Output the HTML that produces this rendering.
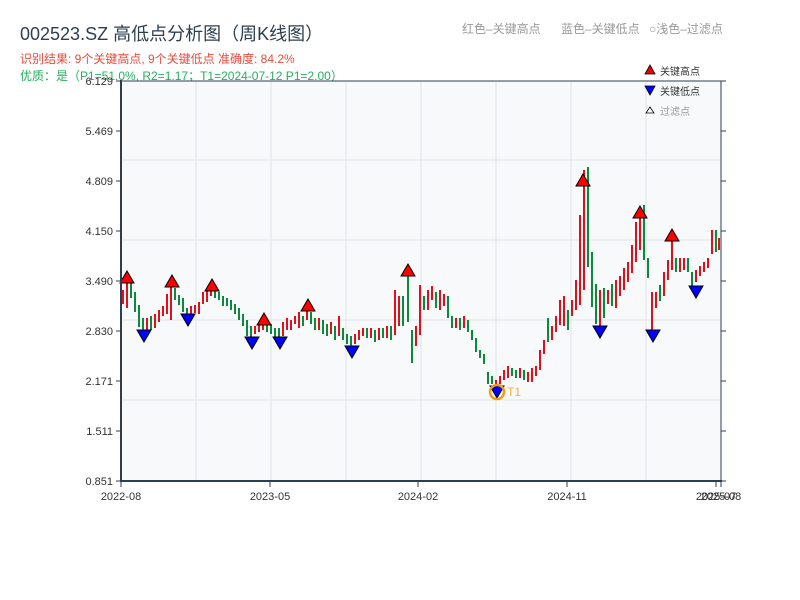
<!DOCTYPE html>
<html><head><meta charset="utf-8"><style>
body{margin:0;background:#fff;width:800px;height:600px;overflow:hidden;font-family:"Liberation Sans","Noto Sans CJK SC",sans-serif}
</style></head><body>
<svg width="800" height="600" xmlns="http://www.w3.org/2000/svg" style="position:absolute;left:0;top:0;font-family:'Liberation Sans','Noto Sans CJK SC',sans-serif">
<text x="20" y="40" font-size="18" fill="#2c3e50">002523.SZ 高低点分析图（周K线图）</text>
<text x="20" y="63" font-size="12" fill="#e74c3c">识别结果: 9个关键高点, 9个关键低点  准确度: 84.2%</text>
<text x="20" y="80" font-size="12" fill="#27ae60">优质：是（P1=51.0%, R2=1.17；T1=2024-07-12 P1=2.00）</text>
<text x="462" y="33" font-size="12" fill="#999">红色–关键高点</text>
<text x="561" y="33" font-size="12" fill="#999">蓝色–关键低点</text>
<text x="649" y="33" font-size="12" fill="#999">○浅色–过滤点</text>
<rect x="121" y="81" width="600" height="400" fill="#f7f9fb"/>
<g stroke="#e1e5ea" stroke-width="1">
<line x1="196" y1="81" x2="196" y2="481"/><line x1="271" y1="81" x2="271" y2="481"/><line x1="346" y1="81" x2="346" y2="481"/><line x1="421" y1="81" x2="421" y2="481"/><line x1="496" y1="81" x2="496" y2="481"/><line x1="571" y1="81" x2="571" y2="481"/><line x1="646" y1="81" x2="646" y2="481"/>
<line x1="121" y1="160" x2="721" y2="160"/><line x1="121" y1="240" x2="721" y2="240"/><line x1="121" y1="320" x2="721" y2="320"/><line x1="121" y1="400" x2="721" y2="400"/>
</g>
<path stroke="#e0101a" stroke-width="2" fill="none" d="M123 290v14M127 278v30M147 318v12M155 314v14M159 310v12M163 306v10M167 294v20M171 285v35M191 306v10M195 305v8M199 302v12M203 292v12M207 290v12M211 282v14M255 326v8M259 322v10M263 316v14M283 322v14M287 318v12M291 320v10M295 316v8M299 312v16M307 308v12M319 318v12M331 322v12M339 316v20M355 334v10M359 330v10M363 328v8M371 328v10M379 328v12M387 326v12M395 290v45M399 296v30M416 326v20M420 285v50M428 290v20M432 286v14M440 290v20M444 294v12M456 318v10M464 316v12M496 380v6M500 376v8M504 370v10M508 366v12M520 368v10M528 372v10M532 368v14M536 366v10M540 350v20M544 340v14M552 326v14M556 316v16M560 300v25M564 296v30M572 300v16M576 280v30M580 215v90M584 170v120M600 290v40M608 290v14M616 280v28M620 276v20M624 268v22M628 262v20M632 245v28M636 222v40M640 210v40M652 292v48M656 292v16M664 272v24M668 260v20M672 240v30M680 258v14M684 258v12M696 270v12M700 266v10M704 262v10M708 258v10M712 230v24M719 238v12"/>
<path stroke="#0a8a3a" stroke-width="2" fill="none" d="M131 280v18M135 292v20M139 305v22M143 318v14M151 316v14M175 288v12M179 295v10M183 298v14M187 308v12M215 288v10M219 292v8M223 296v10M227 298v8M231 300v10M235 304v10M239 308v12M243 314v12M247 320v16M251 326v12M267 322v10M271 324v10M275 328v10M279 328v12M303 316v10M311 312v12M315 318v12M323 320v14M327 324v12M335 326v14M343 328v12M347 334v10M351 336v10M367 328v10M375 330v12M383 328v10M391 326v14M403 296v30M408 276v46M412 330v33M424 296v14M436 292v16M448 296v22M452 316v12M460 318v12M468 320v12M472 330v10M476 338v14M480 350v8M484 354v10M488 372v12M492 376v8M512 368v8M516 370v8M524 370v10M548 318v24M568 310v20M588 167v100M592 252v55M596 284v40M604 288v30M612 284v22M644 205v55M648 258v20M660 285v16M676 258v14M688 258v14M692 272v14M716 230v22"/>
<g stroke="#000" stroke-width="1" fill="#f00">
<polygon points="127,271 134,283 120,283"/><polygon points="172,275 179,287 165,287"/><polygon points="212,279 219,291 205,291"/><polygon points="264,313 271,325 257,325"/><polygon points="308,299 315,311 301,311"/><polygon points="408,264 415,276 401,276"/><polygon points="583,174 590,186 576,186"/><polygon points="640,206 647,218 633,218"/><polygon points="672,229 679,241 665,241"/>
</g>
<g stroke="#000" stroke-width="1" fill="#00f">
<polygon points="144,342 151,330 137,330"/><polygon points="188,326 195,314 181,314"/><polygon points="252,349 259,337 245,337"/><polygon points="280,349 287,337 273,337"/><polygon points="352,358 359,346 345,346"/><polygon points="497,398 504,386 490,386"/><polygon points="600,338 607,326 593,326"/><polygon points="653,342 660,330 646,330"/><polygon points="696,298 703,286 689,286"/>
</g>
<circle cx="497" cy="392" r="7" fill="none" stroke="#f39c12" stroke-width="2.5"/>
<text x="507" y="396" font-size="12" fill="#f5b041">T1</text>
<rect x="121" y="81" width="600" height="400" fill="none" stroke="#2c3e50" stroke-width="1"/>
<line x1="121" y1="80" x2="121" y2="482" stroke="#2c3e50" stroke-width="2"/>
<line x1="120" y1="481" x2="722" y2="481" stroke="#2c3e50" stroke-width="2"/>
<g font-size="11" fill="#333" text-anchor="end">
<text x="113" y="85">6.129</text><text x="113" y="135">5.469</text><text x="113" y="185">4.809</text><text x="113" y="235">4.150</text><text x="113" y="285">3.490</text><text x="113" y="335">2.830</text><text x="113" y="385">2.171</text><text x="113" y="435">1.511</text><text x="113" y="485">0.851</text>
</g>
<path stroke="#2c3e50" d="M116 81h5M116 131h5M116 181h5M116 231h5M116 281h5M116 331h5M116 381h5M116 431h5M116 481h5M721 81h5M721 131h5M721 181h5M721 231h5M721 281h5M721 331h5M721 381h5M721 431h5M721 481h5M121 481v6M270 481v6M418 481v6M567 481v6M716 481v6M721 481v6"/>
<g font-size="11" fill="#333" text-anchor="middle">
<text x="121" y="500">2022-08</text><text x="270" y="500">2023-05</text><text x="418" y="500">2024-02</text><text x="567" y="500">2024-11</text><text x="716" y="500">2025-07</text><text x="721" y="500">2025-08</text>
</g>
<g font-size="10" fill="#333">
<polygon points="650,65 655,74 645,74" fill="#e00" stroke="#000" stroke-width=".8"/><text x="660" y="75">关键高点</text>
<polygon points="645,86 655,86 650,95" fill="#00f" stroke="#000" stroke-width=".8"/><text x="660" y="95">关键低点</text>
<polygon points="650,107 654,113 646,113" fill="#fff" stroke="#000" stroke-width=".8"/><text x="660" y="115" fill="#999">过滤点</text>
</g>
</svg>
</body></html>
